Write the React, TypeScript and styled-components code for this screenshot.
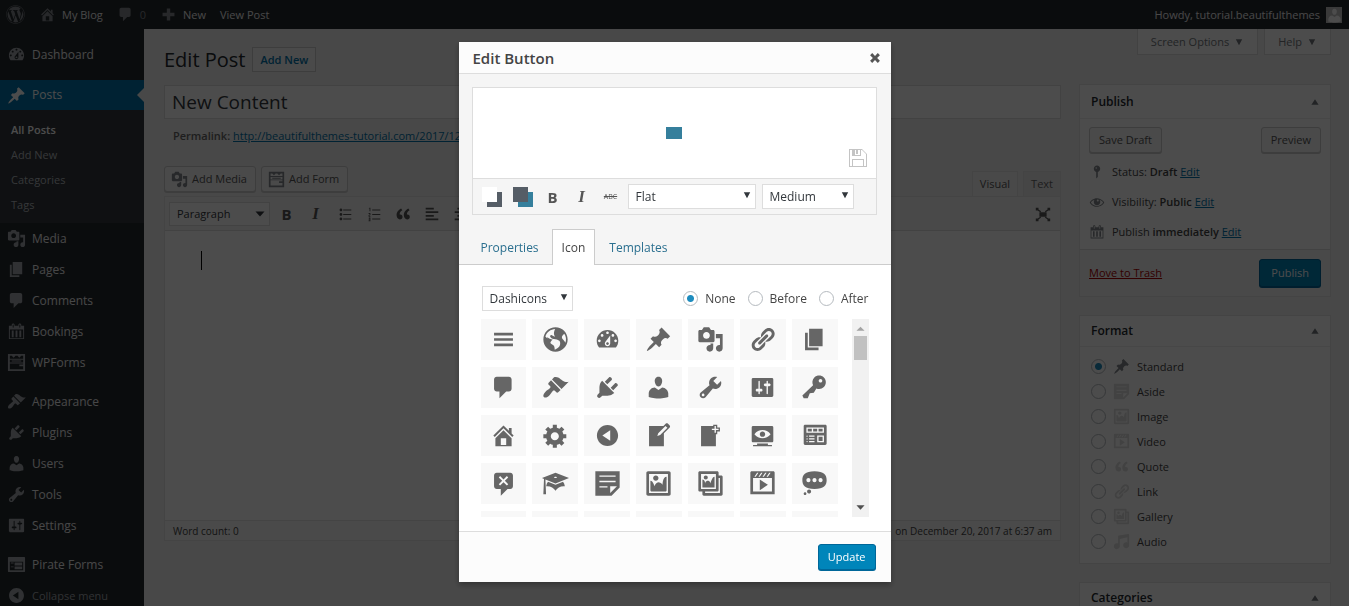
import React, { useState } from 'react';
import styled, { createGlobalStyle, css } from 'styled-components';
import { FaWordpress } from 'react-icons/fa';

const GlobalStyle = createGlobalStyle`
  * { box-sizing: border-box; }
  body {
    margin: 0;
    background: #f1f1f1;
    color: #444;
    font-family: 'Open Sans', 'Noto Sans', 'Liberation Sans', sans-serif;
    font-size: 11px;
    line-height: 18px;
  }
  button, input, select, textarea { font: inherit; color: inherit; margin: 0; }
  h1, h2, p, ul { margin: 0; padding: 0; }
  ul { list-style: none; }
  a { color: #0073aa; }
`;

/* ---------- Icon set (20x20 grid) ---------- */

const paths = {
  menu: 'M17 7V5H3v2h14zm0 4V9H3v2h14zm0 4v-2H3v2h14z',
  site: 'M10 1c-4.97 0-9 4.03-9 9s4.03 9 9 9 9-4.03 9-9-4.03-9-9-9zm3.46 11.95c0 1.47-.8 3.3-4.06 4.7.3-4.17-2.52-3.69-3.2-5 .126-1.1.804-2.063 1.8-2.55-1.552-.266-3-.96-4.18-2 .05.47.28.904.64 1.21-.782-.295-1.458-.817-1.94-1.5.977-3.225 3.883-5.482 7.25-5.63-.84 1.38-1.5 4.13 0 5.57C8.23 8 7.26 6 6.41 6.79c-1.13 1.06.33 2.51 3.42 3.08 3.29.59 3.66 1.58 3.63 3.08zm1.34-4c-.32-1.11.62-2.23 1.69-3.14 1.356 1.955 1.67 4.45.84 6.68-.77-1.89-2.17-2.32-2.53-3.57v.03z',
  dashboard: 'M3.76 16h12.48c1.1-1.37 1.76-3.11 1.76-5 0-4.42-3.58-8-8-8s-8 3.58-8 8c0 1.89.66 3.63 1.76 5zM10 4c.55 0 1 .45 1 1s-.45 1-1 1-1-.45-1-1 .45-1 1-1zM6 6c.55 0 1 .45 1 1s-.45 1-1 1-1-.45-1-1 .45-1 1-1zm8 0c.55 0 1 .45 1 1s-.45 1-1 1-1-.45-1-1 .45-1 1-1zm-5.37 5.55L12 7v6c0 1.1-.9 2-2 2s-2-.9-2-2c0-.57.24-1.08.63-1.45zM4 10c.55 0 1 .45 1 1s-.45 1-1 1-1-.45-1-1 .45-1 1-1zm12 0c.55 0 1 .45 1 1s-.45 1-1 1-1-.45-1-1 .45-1 1-1zm-5 3c0-.55-.45-1-1-1s-1 .45-1 1 .45 1 1 1 1-.45 1-1z',
  post: 'M10.44 3.02l1.82-1.82 6.36 6.35-1.83 1.82c-1.05-.68-2.48-.57-3.41.36l-.75.75c-.92.93-1.04 2.35-.35 3.41l-1.83 1.82-2.41-2.41-2.8 2.79c-.42.42-3.38 2.71-3.8 2.29s1.86-3.39 2.28-3.81l2.79-2.79L4.1 9.36l1.83-1.82c1.05.69 2.48.57 3.4-.36l.75-.75c.93-.92 1.05-2.35.36-3.41z',
  media: 'M13 11V4c0-.55-.45-1-1-1h-1.67L9 1H5L3.67 3H2c-.55 0-1 .45-1 1v7c0 .55.45 1 1 1h10c.55 0 1-.45 1-1zM7 4.5c1.38 0 2.5 1.12 2.5 2.5S8.38 9.5 7 9.5 4.5 8.38 4.5 7 5.62 4.5 7 4.5zM14 6h5v10.5c0 1.38-1.12 2.5-2.5 2.5S14 17.88 14 16.5s1.12-2.5 2.5-2.5c.17 0 .34.02.5.05V9h-3V6zm-4 8.05V13h2v3.5c0 1.38-1.12 2.5-2.5 2.5S7 17.88 7 16.5 8.12 14 9.5 14c.17 0 .34.02.5.05z',
  links: 'M17.74 2.76c1.68 1.69 1.68 4.41 0 6.1l-1.53 1.52c-1.12 1.12-2.7 1.47-4.14 1.09l2.62-2.61.76-.77.76-.76c.84-.84.84-2.2 0-3.04-.84-.85-2.2-.85-3.04 0l-.77.76-3.38 3.38c-.37-1.44-.02-3.02 1.1-4.14l1.52-1.53c1.69-1.68 4.42-1.68 6.1 0zM8.59 13.43l5.34-5.34c.42-.42.42-1.1 0-1.52-.44-.43-1.13-.39-1.53 0l-5.33 5.34c-.42.42-.42 1.1 0 1.52.44.43 1.13.39 1.52 0zm-.76 2.29l4.14-4.15c.38 1.44.03 3.02-1.09 4.14l-1.52 1.53c-1.69 1.68-4.41 1.68-6.1 0-1.68-1.68-1.68-4.42 0-6.1l1.53-1.52c1.12-1.12 2.7-1.47 4.14-1.1l-4.14 4.15c-.85.84-.85 2.2 0 3.05.84.84 2.2.84 3.04 0z',
  page: 'M6 15V2h10v13H6zm-1 1h8v2H3V5h2v11z',
  comments: 'M5 2h9c1.1 0 2 .9 2 2v7c0 1.1-.9 2-2 2h-2l-5 5v-5H5c-1.1 0-2-.9-2-2V4c0-1.1.9-2 2-2z',
  appearance: 'M14.48 11.06L7.41 3.99l1.5-1.5c.5-.56 2.3-.47 3.51.32 1.21.8 1.43 1.28 2.91 2.1 1.18.64 2.45 1.26 4.45.85zm-.71.71L6.7 4.7 4.93 6.47c-.39.39-.39 1.02 0 1.41l1.06 1.06c.39.39.39 1.03 0 1.42-.6.6-1.43 1.11-2.21 1.69-.35.26-.7.53-1.01.84C1.43 14.23.4 16.08 1.4 17.07c.99 1 2.84-.03 4.18-1.36.31-.31.58-.66.85-1.02.57-.78 1.08-1.61 1.69-2.21.39-.39 1.02-.39 1.41 0l1.06 1.06c.39.39 1.02.39 1.41 0z',
  plugins: 'M13.11 4.36L9.87 7.6 8 5.73l3.24-3.24c.35-.34 1.05-.2 1.56.32.52.51.66 1.21.31 1.55zm-8 1.77l.91-1.12 9.01 9.01-1.19.84c-.71.71-2.63 1.16-3.82 1.16H6.14L4.9 17.26c-.59.59-1.54.59-2.12 0-.59-.58-.59-1.53 0-2.12l1.24-1.24v-3.88c0-1.13.4-3.19 1.09-3.89zm7.26 3.97l3.24-3.24c.34-.35 1.04-.21 1.55.31.52.51.66 1.21.31 1.55l-3.24 3.25z',
  users: 'M10 9.25c-2.27 0-2.73-3.44-2.73-3.44C7 4.02 7.82 2 9.97 2c2.16 0 2.98 2.02 2.71 3.81 0 0-.41 3.44-2.68 3.44zm0 2.57L12.72 10c2.39 0 4.52 2.33 4.52 4.53v2.49s-3.65 1.13-7.24 1.13c-3.65 0-7.24-1.13-7.24-1.13v-2.49c0-2.25 1.94-4.48 4.47-4.48z',
  tools: 'M16.68 9.77c-1.34 1.34-3.3 1.67-4.95.99l-5.41 6.52c-.99.99-2.59.99-3.58 0s-.99-2.59 0-3.57l6.52-5.42c-.68-1.65-.35-3.61.99-4.95 1.28-1.28 3.12-1.62 4.72-1.06l-2.89 2.89 2.82 2.82 2.86-2.87c.53 1.58.18 3.39-1.08 4.65zM3.81 16.21c.4.39 1.04.39 1.43 0 .4-.4.4-1.04 0-1.43-.39-.4-1.03-.4-1.43 0-.39.39-.39 1.03 0 1.43z',
  settings: 'M18 16V4c0-.55-.45-1-1-1H3c-.55 0-1 .45-1 1v12c0 .55.45 1 1 1h14c.55 0 1-.45 1-1zM8 11h1c.55 0 1 .45 1 1s-.45 1-1 1H8v1.5c0 .28-.22.5-.5.5s-.5-.22-.5-.5V13H6c-.55 0-1-.45-1-1s.45-1 1-1h1V5.5c0-.28.22-.5.5-.5s.5.22.5.5V11zm5-2h-1c-.55 0-1-.45-1-1s.45-1 1-1h1V5.5c0-.28.22-.5.5-.5s.5.22.5.5V7h1c.55 0 1 .45 1 1s-.45 1-1 1h-1v5.5c0 .28-.22.5-.5.5s-.5-.22-.5-.5V9z',
  key: 'M16.95 2.58c1.96 1.95 1.96 5.12 0 7.07-1.51 1.51-3.75 1.84-5.59 1.01l-1.87 3.31-2.99.31L5 18H2l-1-2 7.95-7.69c-.92-1.87-.62-4.18.93-5.73 1.95-1.96 5.12-1.96 7.07 0zm-2.51 3.79c.74 0 1.33-.6 1.33-1.34 0-.73-.59-1.33-1.33-1.33-.73 0-1.33.6-1.33 1.33 0 .74.6 1.34 1.33 1.34z',
  home: 'M16 8.5l1.53 1.53-1.06 1.06L10 4.6l-6.47 6.49-1.06-1.06L10 2.5l4 4v-2h2v4zm-6-2.46l6 5.99V18H4v-5.97zM12 17v-5H8v5h4z',
  generic: 'M18 12h-2.18c-.17.7-.44 1.35-.81 1.93l1.54 1.54-2.1 2.1-1.54-1.54c-.58.36-1.23.63-1.91.79V19H8v-2.18c-.68-.16-1.33-.43-1.91-.79l-1.54 1.54-2.12-2.12 1.54-1.54c-.36-.58-.63-1.23-.79-1.91H1V9.03h2.17c.16-.7.44-1.35.8-1.94L2.43 5.55l2.1-2.1 1.54 1.54c.58-.37 1.24-.64 1.93-.81V2h3v2.18c.68.16 1.33.43 1.91.79l1.54-1.54 2.12 2.12-1.54 1.54c.36.59.64 1.24.8 1.94H18V12zm-8.5 1.5c1.66 0 3-1.34 3-3s-1.34-3-3-3-3 1.34-3 3 1.34 3 3 3z',
  collapse: 'M10 2.16c4.33 0 7.84 3.51 7.84 7.84s-3.51 7.84-7.84 7.84S2.16 14.33 2.16 10 5.71 2.16 10 2.16zm2 11.72V6.12L6.18 9.97z',
  write: 'M16.89 1.2l1.41 1.41c.39.39.39 1.02 0 1.41L14 8.33V18H3V3h10.67l1.8-1.8c.4-.39 1.03-.4 1.42 0zm-5.66 8.48l5.37-5.36-1.42-1.42-5.36 5.37-.71 2.12z',
  addPage: 'M17 7V4h-2V2h-3v1H3v15h11V9h1V7h2zm-1-2v1h-2v2h-1V6h-2V5h2V3h1v2h2z',
  viewSite: 'M18 14V4c0-.55-.45-1-1-1H3c-.55 0-1 .45-1 1v10c0 .55.45 1 1 1h14c.55 0 1-.45 1-1zm-8-8c2.3 0 4.4 1.14 6 3-1.6 1.86-3.7 3-6 3s-4.4-1.14-6-3c1.6-1.86 3.7-3 6-3zm2 3c0-1.1-.9-2-2-2s-2 .9-2 2 .9 2 2 2 2-.9 2-2zm2 8h3v1H3v-1h3v-1h8v1z',
  widgets: 'M19 16V3c0-.55-.45-1-1-1H3c-.55 0-1 .45-1 1v13c0 .55.45 1 1 1h15c.55 0 1-.45 1-1zM4 4h13v4H4V4zm1 1v2h3V5H5zm4 0v2h3V5H9zm4 0v2h3V5h-3zm-8.5 5c.28 0 .5.22.5.5s-.22.5-.5.5-.5-.22-.5-.5.22-.5.5-.5zM6 10h4v1H6v-1zm6 0h5v5h-5v-5zm-7.5 2c.28 0 .5.22.5.5s-.22.5-.5.5-.5-.22-.5-.5.22-.5.5-.5zM6 12h4v1H6v-1zm7-1v3h3v-3h-3zm-8.5 3c.28 0 .5.22.5.5s-.22.5-.5.5-.5-.22-.5-.5.22-.5.5-.5zM6 14h4v1H6v-1z',
  dismiss: 'M5 2h10c1.1 0 2 .9 2 2v8c0 1.1-.9 2-2 2h-2l-5 5v-5H5c-1.1 0-2-.9-2-2V4c0-1.1.9-2 2-2zm8.5 8.5L11 8l2.5-2.5-1-1L10 7 7.5 4.5l-1 1L9 8l-2.5 2.5 1 1L10 9l2.5 2.5z',
  learn: 'M10 10L2.54 7.02 3 18H1l.48-11.41L0 6l10-4 10 4zm0-5c-.55 0-1 .22-1 .5s.45.5 1 .5 1-.22 1-.5-.45-.5-1-.5zm0 6l5.57-2.23c.71.94 1.2 2.07 1.36 3.3-.3-.04-.61-.07-.93-.07-2.55 0-4.78 1.37-6 3.41C8.78 13.37 6.55 12 4 12c-.32 0-.63.03-.93.07.16-1.23.65-2.36 1.36-3.3z',
  aside: 'M1 1h18v12l-6 6H1V1zm3 3v1h12V4H4zm0 4v1h12V8H4zm6 5v-1H4v1h6zm2 4l5-5h-5v5z',
  image: 'M2.25 1h15.5c.69 0 1.25.56 1.25 1.25v15.5c0 .69-.56 1.25-1.25 1.25H2.25C1.56 19 1 18.44 1 17.75V2.25C1 1.56 1.56 1 2.25 1zM17 17V3H3v14h14zM10 6c0-1.1-.9-2-2-2s-2 .9-2 2 .9 2 2 2 2-.9 2-2zm3 5s0-6 3-6v10c0 .55-.45 1-1 1H5c-.55 0-1-.45-1-1V8c2 0 3 4 3 4s1-3 3-3 3 2 3 2z',
  gallery: 'M16 4h1.96c.57 0 1.04.47 1.04 1.04v12.92c0 .57-.47 1.04-1.04 1.04H5.04C4.47 19 4 18.53 4 17.96V16H2.04C1.47 16 1 15.53 1 14.96V2.04C1 1.47 1.47 1 2.04 1h12.92c.57 0 1.04.47 1.04 1.04V4zM3 14h11V3H3v11zm5-8.5C8 4.67 7.33 4 6.5 4S5 4.67 5 5.5 5.67 7 6.5 7 8 6.33 8 5.5zm2 4.5s1-5 3-5v8H4V7c2 0 2 3 2 3s.33-2 2-2 2 2 2 2zm7 7V6h-1v8.96c0 .57-.47 1.04-1.04 1.04H6v1h11z',
  video: 'M2 1h16c.55 0 1 .45 1 1v16l-18-.02V2c0-.55.45-1 1-1zm4 1L4 5h1l2-3H6zm4 0H9L7 5h1l2-3zm3 0h-1l-2 3h1l2-3zm3 0h-1l-2 3h1l2-3zm1 14V6H3v10h14zM8 7l6 4-6 4V7z',
  status: 'M10 1c7 0 9 2.91 9 6.5S17 14 10 14s-9-2.91-9-6.5S3 1 10 1zM5.5 9C6.33 9 7 8.33 7 7.5S6.33 6 5.5 6 4 6.67 4 7.5 4.67 9 5.5 9zM10 9c.83 0 1.5-.67 1.5-1.5S10.83 6 10 6s-1.5.67-1.5 1.5S9.17 9 10 9zm4.5 0c.83 0 1.5-.67 1.5-1.5S15.33 6 14.5 6 13 6.67 13 7.5 13.67 9 14.5 9zM6 14.5c.83 0 1.5.67 1.5 1.5s-.67 1.5-1.5 1.5-1.5-.67-1.5-1.5.67-1.5 1.5-1.5zm-3 2c.55 0 1 .45 1 1s-.45 1-1 1-1-.45-1-1 .45-1 1-1z',
  quote: 'M9.49 13.22c0-.74-.2-1.38-.61-1.9-.62-.78-1.83-.88-2.53-.72-.29-1.65 1.11-3.75 2.92-4.65L7.88 4c-2.73 1.3-5.42 4.28-4.96 8.05C3.21 14.43 4.59 16 6.54 16c.85 0 1.56-.25 2.12-.75s.83-1.18.83-2.03zm8.05 0c0-.74-.2-1.38-.61-1.9-.63-.78-1.83-.88-2.53-.72-.29-1.65 1.11-3.75 2.92-4.65L15.93 4c-2.73 1.3-5.41 4.28-4.95 8.05.29 2.38 1.66 3.95 3.61 3.95.85 0 1.56-.25 2.12-.75s.83-1.18.83-2.03z',
  audio: 'M6.99 3.08l11.02-2c.55-.08.99.45.99 1V14.5c0 1.94-1.57 3.5-3.5 3.5S12 16.44 12 14.5c0-1.93 1.57-3.5 3.5-3.5.54 0 1.04.14 1.5.35V5.08l-9 2V16c-.24 1.7-1.74 3-3.5 3C2.57 19 1 17.44 1 15.5 1 13.57 2.57 12 4.5 12c.54 0 1.04.14 1.5.35V4.08c0-.55.44-.91.99-1z',
  ul: 'M5.5 7C4.67 7 4 6.33 4 5.5 4 4.68 4.67 4 5.5 4 6.32 4 7 4.68 7 5.5 7 6.33 6.32 7 5.5 7zM8 5h9v1H8V5zm-2.500 7c-.83 0-1.5-.67-1.5-1.5C4 9.68 4.67 9 5.5 9c.82 0 1.5.68 1.5 1.5 0 .83-.68 1.5-1.5 1.5zM8 10h9v1H8v-1zm-2.5 7c-.83 0-1.5-.67-1.5-1.5 0-.82.67-1.5 1.5-1.5.82 0 1.5.68 1.5 1.5 0 .83-.68 1.5-1.5 1.5zM8 15h9v1H8v-1z',
  ol: 'M8 5h9v1H8V5zm0 5h9v1H8v-1zm0 5h9v1H8v-1zM5 3h1v4H5V4H4zM4 9h2v2H5v1h1v1H4v-2h1v-1H4zm0 5h2v4H4v-1h1v-1H4v-1h1z',
  alignLeft: 'M12 5V3H3v2h9zm5 4V7H3v2h14zm-5 4v-2H3v2h9zm5 4v-2H3v2h14z',
  alignCenter: 'M14 5V3H6v2h8zm3 4V7H3v2h14zm-3 4v-2H6v2h8zm3 4v-2H3v2h14z',
  distraction: 'M6 8h8v5H6zM2 3h3v2l3 2-1 1-3-2H2zm16 0v3h-2l-3 2-1-1 3-2V3zM2 18v-3h2l3-2 1 1-3 2v2zm16 0h-3v-2l-3-2 1-1 3 2h2z',
  plus: 'M17 8v4h-5v5H8v-5H3V8h5V3h4v5z',
  calendar: 'M15 4h3v14H2V4h3V3c0-.83.67-1.5 1.5-1.5S8 2.17 8 3v1h4V3c0-.83.67-1.5 1.5-1.5S15 2.17 15 3v1zM6 3v2.5c0 .28.22.5.5.5s.5-.22.5-.5V3c0-.28-.22-.5-.5-.5S6 2.72 6 3zm7 0v2.5c0 .28.22.5.5.5s.5-.22.5-.5V3c0-.28-.22-.5-.5-.5s-.5.22-.5.5zm4 14V8H3v9h14zM7 16V9H5v7h2zm4 0V9H9v7h2zm4 0V9h-2v7h2z',
  pin: 'M14 6c0 1.86-1.28 3.41-3 3.86V16c0 1-2 2-2 2V9.86c-1.72-.45-3-2-3-3.86 0-2.21 1.79-4 4-4s4 1.79 4 4zM8 5c0 .55.45 1 1 1s1-.45 1-1-.45-1-1-1-1 .45-1 1z',
  eye: 'M18.3 9.5C15 4.9 8.5 3.8 3.9 7.2c-1.2.9-2.2 2.1-3 3.4.2.4.5.8.8 1.2 3.3 4.6 9.6 5.6 14.2 2.4.9-.7 1.7-1.4 2.4-2.4.3-.4.5-.8.8-1.2-.3-.4-.5-.8-.8-1.1zm-8.2-2.3c.5-.5 1.3-.5 1.8 0s.5 1.3 0 1.8-1.3.5-1.8 0-.5-1.3 0-1.8zm-.1 7.7c-3.1 0-6-1.6-7.7-4.2C3.5 9 5.1 7.8 7 7.2c-.7.8-1 1.7-1 2.7 0 2.2 1.7 4.1 4 4.1 2.2 0 4.1-1.7 4.1-4v-.1c0-1-.4-2-1.1-2.7 1.9.6 3.5 1.8 4.7 3.5-1.7 2.6-4.6 4.2-7.7 4.2z',
  form: 'M1 1h18v18H1zm2 2v3h14V3zm0 4v3h14V7zm0 4v6h14v-3h-4v-2h4v-1zM5 8h10v1H5zM5 3l2 2 2-2zm6 0l2 2 2-2z',
  feedback: 'M2 2h16c.55 0 1 .45 1 1v14c0 .55-.45 1-1 1H2c-.55 0-1-.45-1-1V3c0-.55.45-1 1-1zm15 14V7H3v9h14zM4 8v1h3V8H4zm4 0v3h8V8H8zm-4 4v1h3v-1H4zm4 0v3h8v-3H8z',
  save: 'M1 1h13l5 5v13H1zm1 1v16h2v-7h12v7h2V6l-4-4h-1v6H4V2zm5 0v5h5V2h-2v4H8V2zM5 12v6h10v-6z',
  up: 'M1 17l9-14 9 14z',
  down: 'M2 3l8 15 8-15z',
  flatUp: 'M1 15l9-9 9 9z',
  flatDown: 'M1 5h18l-9 10z',
  close: 'M3 6l3-3 4 4 4-4 3 3-4 4 4 4-3 3-4-4-4 4-3-3 4-4z',
};
type IconName = keyof typeof paths;

const Svg = styled.svg`
  display: block;
  flex: none;
  fill: currentColor;
`;

function Icon({ name, size = 19 }: { name: IconName; size?: number }) {
  return (
    <Svg viewBox="0 0 20 20" width={size} height={size} aria-hidden="true" fillRule="evenodd">
      <path d={paths[name]} />
    </Svg>
  );
}

/* ---------- Shell ---------- */

const Page = styled.div`
  height: 100vh;
  display: flex;
  flex-direction: column;
  overflow: hidden;
`;

const AdminBar = styled.header`
  flex: none;
  height: 29px;
  padding: 0 7px 0 6px;
  display: flex;
  align-items: center;
  justify-content: space-between;
  background: #23282d;
  color: #eee;
`;

const BarGroup = styled.nav`
  display: flex;
  align-items: center;
  gap: 14px;
`;

const BarLink = styled.a<{ $dim?: boolean }>`
  display: flex;
  align-items: center;
  gap: 6px;
  color: #eee;
  text-decoration: none;
  svg { color: #82878c; }
  span { color: ${(p) => (p.$dim ? '#82878c' : 'inherit')}; }
`;

const Avatar = styled.span`
  width: 16px;
  height: 16px;
  background: #c4c4c4;
  display: flex;
  justify-content: center;
  overflow: hidden;
  svg { color: #fff; }
`;

const Body = styled.div`
  flex: 1;
  min-height: 0;
  display: flex;
`;

const SideMenu = styled.nav`
  flex: none;
  width: 144px;
  padding-top: 10px;
  background: #23282d;
`;

const MenuItem = styled.a<{ $current?: boolean; $gap?: boolean; $muted?: boolean }>`
  position: relative;
  height: ${(p) => (p.$current ? 30 : 31)}px;
  margin-top: ${(p) => (p.$gap ? 8 : 0)}px;
  padding-left: 7px;
  display: flex;
  align-items: center;
  gap: 6px;
  text-decoration: none;
  color: ${(p) => (p.$muted ? '#a0a5aa' : '#eee')};
  font-size: ${(p) => (p.$muted ? 11 : 12)}px;
  svg { color: #a0a5aa; }
  ${(p) =>
    p.$current &&
    css`
      margin-top: 10px;
      background: #0073aa;
      color: #fff;
      svg { color: #fff; }
      &::after {
        content: '';
        position: absolute;
        right: 0;
        top: 8px;
        border: 7px solid transparent;
        border-right-color: #f1f1f1;
        border-left: 0;
      }
    `}
`;

const SubMenu = styled.ul`
  padding: 7px 0 6px;
  background: #32373c;
`;

const SubLink = styled.a<{ $active?: boolean }>`
  display: block;
  padding-left: 11px;
  line-height: 25px;
  text-decoration: none;
  color: ${(p) => (p.$active ? '#fff' : '#b4b9be')};
  font-weight: ${(p) => (p.$active ? 600 : 400)};
`;

const Content = styled.main`
  flex: 1;
  min-width: 0;
  padding: 0 18px 0 20px;
  display: grid;
  grid-template-columns: minmax(0, 1fr) 252px;
  column-gap: 18px;
`;

const Column = styled.div`
  min-width: 0;
`;

/* ---------- Editor column ---------- */

const TitleRow = styled.div`
  padding-top: 17px;
  height: 56px;
  display: flex;
  align-items: flex-start;
  gap: 7px;
  h1 {
    font-size: 20px;
    line-height: 28px;
    font-weight: 400;
    color: #23282d;
  }
`;

const AddNew = styled.a`
  margin-top: 1px;
  padding: 0 7px;
  border: 1px solid #ccc;
  background: #f7f7f7;
  line-height: 23px;
  font-weight: 600;
  text-decoration: none;
`;

const TitleInput = styled.input`
  display: block;
  width: 100%;
  height: 34px;
  padding: 0 7px;
  border: 1px solid #ddd;
  background: #fff;
  color: #32373c;
  font-size: 19px;
`;

const Permalink = styled.p`
  padding: 8px 9px 0;
  color: #666;
  white-space: nowrap;
  strong { font-weight: 600; }
`;

const MediaRow = styled.div`
  margin-top: 21px;
  display: flex;
  justify-content: space-between;
  align-items: flex-end;
`;

const ButtonGroup = styled.div`
  display: flex;
  gap: 5px;
  padding-bottom: 4px;
`;

const Button = styled.button<{ $primary?: boolean; $tall?: boolean; $icon?: boolean }>`
  height: ${(p) => (p.$tall ? 28 : 26)}px;
  padding: ${(p) => (p.$icon ? '0 8px 0 6px' : p.$tall ? '0 11px' : '0 9px')};
  display: inline-flex;
  align-items: center;
  gap: 4px;
  border: 1px solid ${(p) => (p.$primary ? '#006799' : '#ccc')};
  border-radius: 3px;
  background: ${(p) => (p.$primary ? '#0085ba' : '#f7f7f7')};
  box-shadow: 0 1px 0 ${(p) => (p.$primary ? '#006799' : '#ccc')};
  color: ${(p) => (p.$primary ? '#fff' : '#555')};
  white-space: nowrap;
  svg { color: #82878c; }
`;

const ModeTabs = styled.div`
  display: flex;
  gap: 5px;
`;

const ModeTab = styled.button<{ $active?: boolean }>`
  height: 25px;
  padding: 0 7px;
  border: 1px solid #e5e5e5;
  border-bottom: 0;
  background: ${(p) => (p.$active ? '#f5f5f5' : '#ebebeb')};
  color: ${(p) => (p.$active ? '#555' : '#666')};
`;

const Editor = styled.section`
  border: 1px solid #e5e5e5;
  background: #fff;
`;

const Toolbar = styled.div`
  height: 34px;
  padding: 0 8px 0 4px;
  display: flex;
  align-items: center;
  gap: 7px;
  border-bottom: 1px solid #ddd;
  background: #f5f5f5;
  color: #555;
`;

const ToolGroup = styled.div<{ $wide?: boolean }>`
  display: flex;
  align-items: center;
  gap: ${(p) => (p.$wide ? 11 : 10)}px;
`;

const ToolButton = styled.button<{ $end?: boolean; $narrow?: boolean }>`
  width: ${(p) => (p.$narrow ? 18 : 19)}px;
  height: 24px;
  padding: 0;
  margin-left: ${(p) => (p.$end ? 'auto' : 0)};
  display: flex;
  align-items: center;
  justify-content: center;
  border: 0;
  background: none;
  color: #555;
`;

const BoldGlyph = styled.b`
  font-size: 15px;
  line-height: 20px;
`;

const ItalicGlyph = styled.i`
  font-family: 'Liberation Serif', serif;
  font-size: 17px;
  line-height: 20px;
  font-weight: 700;
`;

const StrikeGlyph = styled.s`
  font-size: 7px;
  line-height: 20px;
`;

const SelectBox = styled.span<{ $width: number; $height: number }>`
  position: relative;
  display: block;
  flex: none;
  width: ${(p) => p.$width}px;
  height: ${(p) => p.$height}px;
  color: #32373c;
  svg {
    position: absolute;
    right: 5px;
    top: 7px;
    pointer-events: none;
  }
`;

const NativeSelect = styled.select`
  appearance: none;
  width: 100%;
  height: 100%;
  padding: 0 8px 0 7px;
  border: 1px solid #ddd;
  border-radius: 0;
  background: #fff;
`;

interface SelectProps {
  label: string;
  value: string;
  width: number;
  height?: number;
  flat?: boolean;
}

function Select({ label, value, width, height = 25, flat }: SelectProps) {
  return (
    <SelectBox $width={width} $height={height}>
      <NativeSelect aria-label={label} defaultValue={value}>
        <option>{value}</option>
      </NativeSelect>
      <Icon name={flat ? 'flatDown' : 'down'} size={flat ? 10 : 8} />
    </SelectBox>
  );
}

const TextArea = styled.textarea`
  display: block;
  width: 100%;
  height: 289px;
  padding: 20px 36px;
  border: 0;
  resize: none;
  background: #fff;
  outline: 0;
`;

const Writing = styled.div`
  position: relative;
`;

const Caret = styled.span`
  position: absolute;
  left: 36px;
  top: 20px;
  width: 1px;
  height: 19px;
  background: #000;
`;

const StatusBar = styled.div`
  height: 20px;
  padding: 0 8px;
  display: flex;
  justify-content: space-between;
  align-items: center;
  border-top: 1px solid #e5e5e5;
  background: #f7f7f7;
  font-size: 10px;
`;

/* ---------- Side column ---------- */

const ScreenMeta = styled.div`
  height: 55px;
  display: flex;
  justify-content: flex-end;
  align-items: flex-start;
  gap: 6px;
`;

const MetaButton = styled.button`
  height: 26px;
  padding: 0 14px 0 13px;
  display: flex;
  align-items: center;
  gap: 6px;
  border: 1px solid #ddd;
  border-top: 0;
  background: #fff;
  color: #72777c;
  white-space: nowrap;
`;

const Panel = styled.section`
  margin-bottom: 18px;
  border: 1px solid #e5e5e5;
  background: #fff;
`;

const PanelHead = styled.div<{ $short?: boolean }>`
  height: ${(p) => (p.$short ? 31 : 34)}px;
  padding: 0 11px;
  display: flex;
  align-items: center;
  justify-content: space-between;
  border-bottom: 1px solid #eee;
  h2 {
    font-size: 12px;
    font-weight: 600;
    color: #23282d;
  }
  svg { color: #72777c; }
`;

const PublishBody = styled.div`
  padding: 8px 9px 0;
`;

const SpreadRow = styled.div`
  display: flex;
  align-items: center;
  justify-content: space-between;
`;

const MetaList = styled.ul`
  padding: 4px 0 2px;
`;

const MetaRow = styled.li`
  height: 30px;
  display: flex;
  align-items: center;
  gap: 7px;
  svg { color: #82878c; }
  strong { font-weight: 600; }
`;

const PublishFoot = styled(SpreadRow)`
  padding: 9px;
  border-top: 1px solid #ddd;
  background: #f5f5f5;
`;

const TrashLink = styled.a`
  color: #a00;
`;

const FormatList = styled.ul`
  padding: 7px 11px 9px;
`;

const RadioLabel = styled.label`
  display: flex;
  align-items: center;
  gap: 7px;
`;

const FormatLabel = styled(RadioLabel)<{ $faint?: boolean }>`
  height: 25px;
  svg { color: ${(p) => (p.$faint ? '#ddd' : '#82878c')}; }
`;

const Radio = styled.input`
  appearance: none;
  flex: none;
  width: 15px;
  height: 15px;
  border: 1px solid #b4b9be;
  border-radius: 50%;
  background: #fff;
  &:checked {
    background: radial-gradient(circle, #1e8cbe 0 3px, #fff 4px);
  }
`;

/* ---------- Dialog ---------- */

const Overlay = styled.div`
  position: fixed;
  inset: 0;
  padding-top: 42px;
  display: flex;
  align-items: flex-start;
  justify-content: center;
  background: rgba(0, 0, 0, 0.7);
`;

const Dialog = styled.section`
  width: 432px;
  background: #fff;
  box-shadow: 0 3px 6px rgba(0, 0, 0, 0.3);
  font-size: 12px;
`;

const DialogHead = styled.header`
  height: 32px;
  padding: 0 9px 0 14px;
  display: flex;
  align-items: center;
  justify-content: space-between;
  border-bottom: 1px solid #ddd;
  background: #fcfcfc;
  h2 {
    font-size: 15px;
    font-weight: 600;
    color: #444;
  }
`;

const CloseButton = styled.button`
  padding: 0;
  border: 0;
  background: none;
  color: #555;
`;

const DialogTop = styled.div`
  padding: 13px 14px 0 13px;
  background: #f5f5f5;
  border-bottom: 1px solid #ccc;
`;

const Preview = styled.div`
  border: 1px solid #ddd;
`;

const Stage = styled.div`
  position: relative;
  height: 91px;
  display: flex;
  align-items: center;
  justify-content: center;
  background: #fff;
  border-bottom: 1px solid #ddd;
`;

const Sample = styled.span`
  width: 16px;
  height: 12px;
  background: #357f9c;
`;

const SaveButton = styled.button`
  position: absolute;
  right: 8px;
  bottom: 10px;
  padding: 0;
  border: 0;
  background: none;
  color: #c4c4c4;
`;

const StyleBar = styled.div`
  height: 35px;
  padding: 0 9px;
  display: flex;
  align-items: center;
  gap: 8px;
`;

const SwatchButton = styled.button<{ $front: string; $back: string }>`
  position: relative;
  width: 20px;
  height: 20px;
  padding: 0;
  border: 0;
  background: none;
  &::before, &::after {
    content: '';
    position: absolute;
    width: 15px;
    height: 15px;
  }
  &::before { right: 0; bottom: 0; background: ${(p) => p.$back}; }
  &::after { left: 0; top: 0; background: ${(p) => p.$front}; }
`;

const SelectGroup = styled.div`
  display: flex;
  gap: 6px;
`;

const Tabs = styled.div`
  margin-top: 14px;
  margin-bottom: -1px;
  display: flex;
`;

const Tab = styled.button<{ $active?: boolean }>`
  position: relative;
  height: 36px;
  padding: 0 ${(p) => (p.$active ? 9 : 13)}px;
  border: 1px solid ${(p) => (p.$active ? '#ccc' : 'transparent')};
  border-bottom: 0;
  background: ${(p) => (p.$active ? '#fff' : 'none')};
  color: ${(p) => (p.$active ? '#444' : '#2a6f8f')};
  &:first-child { padding-left: 8px; padding-right: 12px; }
`;

const DialogBody = styled.div`
  padding: 21px 22px 14px;
`;

const IconOptions = styled.div`
  display: flex;
  align-items: center;
  justify-content: space-between;
  padding-left: 1px;
`;

const PositionGroup = styled.fieldset`
  margin: 0;
  padding: 0;
  border: 0;
  display: flex;
  gap: 12px;
`;

const Picker = styled.div`
  margin-top: 8px;
  height: 198px;
  display: flex;
  justify-content: space-between;
  gap: 14px;
  overflow: hidden;
`;

const IconGrid = styled.div`
  flex: 1;
  display: grid;
  grid-template-columns: repeat(7, 1fr);
  grid-auto-rows: 41px;
  gap: 7px 6px;
`;

const IconCell = styled.button`
  padding: 0;
  border: 0;
  display: flex;
  align-items: center;
  justify-content: center;
  background: #f8f8f8;
  color: #666;
`;

const ScrollTrack = styled.div`
  width: 17px;
  padding: 5px 2px;
  display: flex;
  flex-direction: column;
  align-items: center;
  background: #f1f1f1;
  color: #505050;
  svg:first-child { color: #a3a3a3; }
`;

const ScrollThumb = styled.span`
  width: 13px;
  height: 24px;
  margin: 3px 0 auto;
  background: #c1c1c1;
`;

const DialogFoot = styled.footer`
  height: 51px;
  padding-right: 15px;
  display: flex;
  align-items: center;
  justify-content: flex-end;
  border-top: 1px solid #ddd;
  background: #fcfcfc;
  font-size: 11px;
`;

/* ---------- Data ---------- */

const topMenu: [string, IconName][] = [
  ['Media', 'media'], ['Pages', 'page'], ['Comments', 'comments'],
  ['Bookings', 'calendar'], ['WPForms', 'form'],
];
const lowerMenu: [string, IconName][] = [
  ['Appearance', 'appearance'], ['Plugins', 'plugins'], ['Users', 'users'],
  ['Tools', 'tools'], ['Settings', 'settings'],
];
const formats: [string, IconName][] = [
  ['Standard', 'post'], ['Aside', 'aside'], ['Image', 'image'], ['Video', 'video'],
  ['Quote', 'quote'], ['Link', 'links'], ['Gallery', 'gallery'], ['Audio', 'audio'],
];
const gridIcons: IconName[] = [
  'menu', 'site', 'dashboard', 'post', 'media', 'links', 'page',
  'comments', 'appearance', 'plugins', 'users', 'tools', 'settings', 'key',
  'home', 'generic', 'collapse', 'write', 'addPage', 'viewSite', 'widgets',
  'dismiss', 'learn', 'aside', 'image', 'gallery', 'video', 'status',
];
const editorTools: [string, IconName][] = [
  ['Bulleted list', 'ul'], ['Numbered list', 'ol'], ['Blockquote', 'quote'],
  ['Align left', 'alignLeft'], ['Align center', 'alignCenter'],
];

function EditDialog() {
  const [position, setPosition] = useState('None');
  return (
    <Overlay>
      <Dialog role="dialog" aria-label="Edit Button">
        <DialogHead>
          <h2>Edit Button</h2>
          <CloseButton aria-label="Close"><Icon name="close" size={14} /></CloseButton>
        </DialogHead>
        <DialogTop>
          <Preview>
            <Stage>
              <Sample />
              <SaveButton aria-label="Save template"><Icon name="save" size={20} /></SaveButton>
            </Stage>
            <StyleBar>
              <ToolGroup $wide>
                <SwatchButton aria-label="Text color" $front="#fff" $back="#555d66" />
                <SwatchButton aria-label="Background color" $front="#555d66" $back="#357f9c" />
                <ToolButton $narrow aria-label="Bold"><BoldGlyph>B</BoldGlyph></ToolButton>
                <ToolButton $narrow aria-label="Italic"><ItalicGlyph>I</ItalicGlyph></ToolButton>
                <ToolButton $narrow aria-label="Strikethrough"><StrikeGlyph>ABC</StrikeGlyph></ToolButton>
              </ToolGroup>
              <SelectGroup>
                <Select label="Style" value="Flat" width={128} />
                <Select label="Size" value="Medium" width={92} />
              </SelectGroup>
            </StyleBar>
          </Preview>
          <Tabs role="tablist">
            <Tab role="tab">Properties</Tab>
            <Tab role="tab" $active aria-selected>Icon</Tab>
            <Tab role="tab">Templates</Tab>
          </Tabs>
        </DialogTop>
        <DialogBody>
          <IconOptions>
            <Select label="Icon set" value="Dashicons" width={91} />
            <PositionGroup aria-label="Icon position">
              {['None', 'Before', 'After'].map((p) => (
                <RadioLabel key={p}>
                  <Radio type="radio" name="position" checked={position === p} onChange={() => setPosition(p)} />
                  {p}
                </RadioLabel>
              ))}
            </PositionGroup>
          </IconOptions>
          <Picker>
            <IconGrid>
              {gridIcons.map((name) => (
                <IconCell key={name} aria-label={name}><Icon name={name} size={27} /></IconCell>
              ))}
              {Array.from({ length: 7 }, (_, i) => <IconCell key={i} aria-label={`More icons ${i + 1}`} />)}
            </IconGrid>
            <ScrollTrack>
              <Icon name="flatUp" size={9} />
              <ScrollThumb />
              <Icon name="flatDown" size={9} />
            </ScrollTrack>
          </Picker>
        </DialogBody>
        <DialogFoot>
          <Button $primary>Update</Button>
        </DialogFoot>
      </Dialog>
    </Overlay>
  );
}

export default function App() {
  return (
    <>
      <GlobalStyle />
      <Page>
        <AdminBar>
          <BarGroup>
            <BarLink href="#" aria-label="WordPress"><FaWordpress size={19} /></BarLink>
            <BarLink href="#"><Icon name="home" size={17} />My Blog</BarLink>
            <BarLink href="#" $dim><Icon name="comments" size={17} /><span>0</span></BarLink>
            <BarLink href="#"><Icon name="plus" size={17} />New</BarLink>
            <BarLink href="#">View Post</BarLink>
          </BarGroup>
          <BarLink href="#">
            Howdy, tutorial.beautifulthemes
            <Avatar><Icon name="users" size={17} /></Avatar>
          </BarLink>
        </AdminBar>
        <Body>
          <SideMenu>
            <MenuItem href="#"><Icon name="dashboard" />Dashboard</MenuItem>
            <MenuItem href="#" $current><Icon name="post" />Posts</MenuItem>
            <SubMenu>
              {['All Posts', 'Add New', 'Categories', 'Tags'].map((t, i) => (
                <li key={t}><SubLink href="#" $active={i === 0}>{t}</SubLink></li>
              ))}
            </SubMenu>
            {topMenu.map(([t, icon]) => (
              <MenuItem key={t} href="#"><Icon name={icon} />{t}</MenuItem>
            ))}
            {lowerMenu.map(([t, icon], i) => (
              <MenuItem key={t} href="#" $gap={i === 0}><Icon name={icon} />{t}</MenuItem>
            ))}
            <MenuItem href="#" $gap><Icon name="feedback" />Pirate Forms</MenuItem>
            <MenuItem href="#" $muted><Icon name="collapse" />Collapse menu</MenuItem>
          </SideMenu>
          <Content>
            <Column>
              <TitleRow>
                <h1>Edit Post</h1>
                <AddNew href="#">Add New</AddNew>
              </TitleRow>
              <TitleInput aria-label="Post title" defaultValue="New Content" />
              <Permalink>
                <strong>Permalink:</strong> <a href="#">http://beautifulthemes-tutorial.com/2017/12/</a>
              </Permalink>
              <MediaRow>
                <ButtonGroup>
                  <Button $icon><Icon name="media" size={17} />Add Media</Button>
                  <Button $icon><Icon name="form" size={17} />Add Form</Button>
                </ButtonGroup>
                <ModeTabs>
                  <ModeTab $active>Visual</ModeTab>
                  <ModeTab>Text</ModeTab>
                </ModeTabs>
              </MediaRow>
              <Editor>
                <Toolbar>
                  <Select label="Block format" value="Paragraph" width={101} height={24} flat />
                  <ToolGroup>
                    <ToolButton aria-label="Bold"><BoldGlyph>B</BoldGlyph></ToolButton>
                    <ToolButton aria-label="Italic"><ItalicGlyph>I</ItalicGlyph></ToolButton>
                    {editorTools.map(([t, icon]) => (
                      <ToolButton key={t} aria-label={t}><Icon name={icon} size={18} /></ToolButton>
                    ))}
                  </ToolGroup>
                  <ToolButton $end aria-label="Distraction-free writing"><Icon name="distraction" size={18} /></ToolButton>
                </Toolbar>
                <Writing>
                  <TextArea aria-label="Post content" />
                  <Caret />
                </Writing>
                <StatusBar>
                  <span>Word count: 0</span>
                  <span>on December 20, 2017 at 6:37 am</span>
                </StatusBar>
              </Editor>
            </Column>
            <Column>
              <ScreenMeta>
                <MetaButton>Screen Options<Icon name="down" size={8} /></MetaButton>
                <MetaButton>Help<Icon name="down" size={8} /></MetaButton>
              </ScreenMeta>
              <Panel>
                <PanelHead><h2>Publish</h2><Icon name="up" size={8} /></PanelHead>
                <PublishBody>
                  <SpreadRow>
                    <Button>Save Draft</Button>
                    <Button>Preview</Button>
                  </SpreadRow>
                  <MetaList>
                    <MetaRow><Icon name="pin" size={16} /><span>Status: <strong>Draft</strong> <a href="#">Edit</a></span></MetaRow>
                    <MetaRow><Icon name="eye" size={16} /><span>Visibility: <strong>Public</strong> <a href="#">Edit</a></span></MetaRow>
                    <MetaRow><Icon name="calendar" size={16} /><span>Publish <strong>immediately</strong> <a href="#">Edit</a></span></MetaRow>
                  </MetaList>
                </PublishBody>
                <PublishFoot>
                  <TrashLink href="#">Move to Trash</TrashLink>
                  <Button $primary $tall>Publish</Button>
                </PublishFoot>
              </Panel>
              <Panel>
                <PanelHead $short><h2>Format</h2><Icon name="up" size={8} /></PanelHead>
                <FormatList>
                  {formats.map(([t, icon], i) => (
                    <li key={t}>
                      <FormatLabel $faint={i > 0}>
                        <Radio type="radio" name="format" defaultChecked={i === 0} />
                        <Icon name={icon} size={17} />
                        {t}
                      </FormatLabel>
                    </li>
                  ))}
                </FormatList>
              </Panel>
              <Panel>
                <PanelHead $short><h2>Categories</h2><Icon name="up" size={8} /></PanelHead>
              </Panel>
            </Column>
          </Content>
        </Body>
      </Page>
      <EditDialog />
    </>
  );
}
